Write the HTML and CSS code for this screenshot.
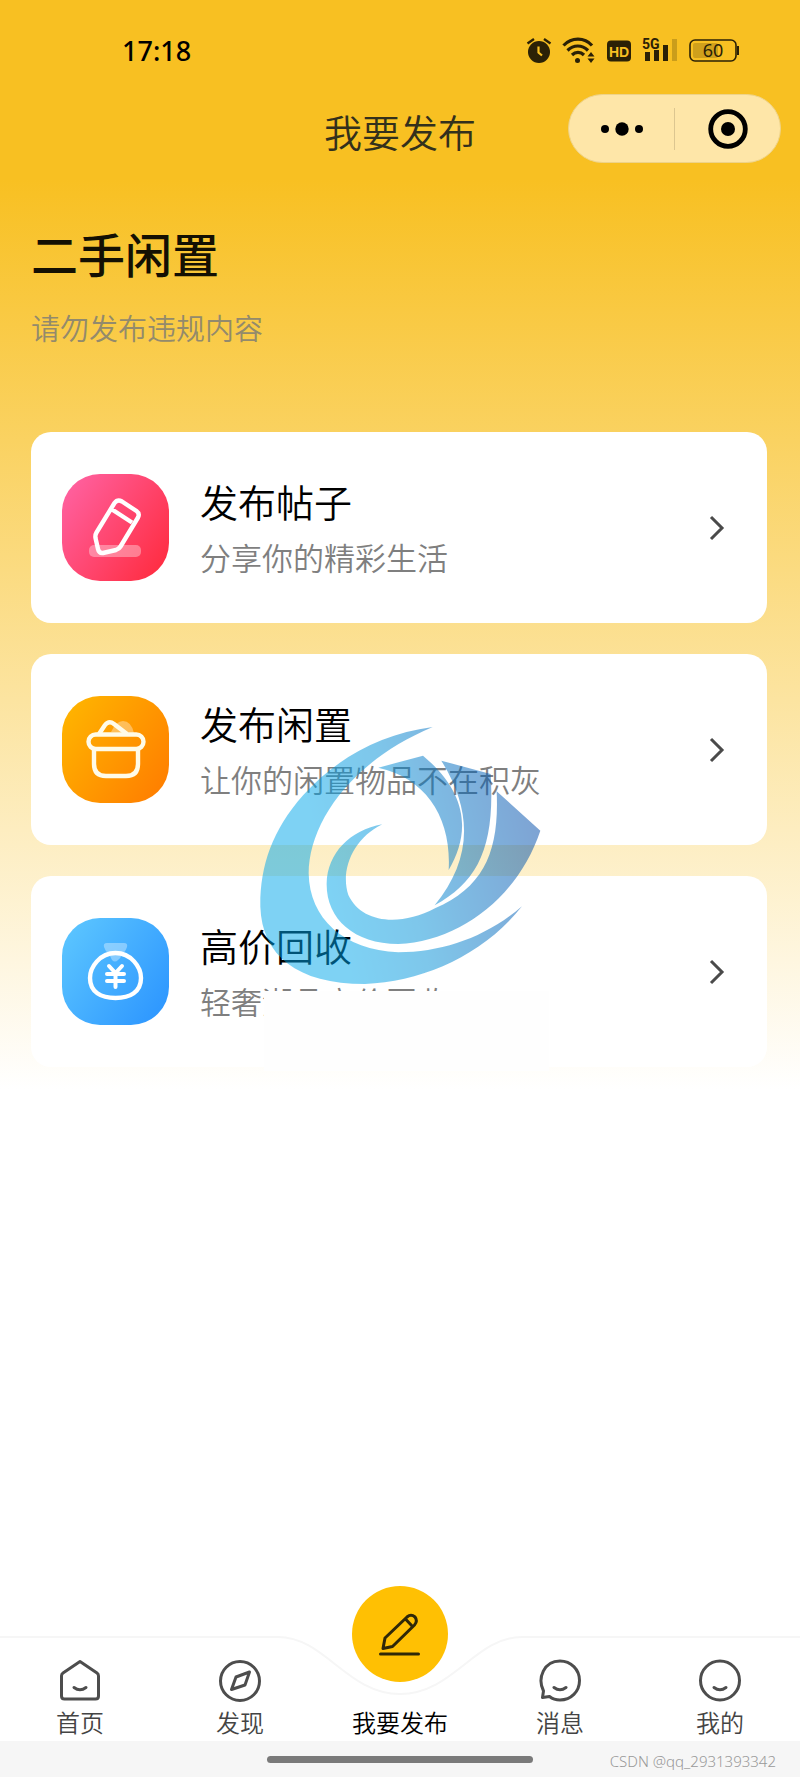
FILE: index.html
```html
<!DOCTYPE html>
<html lang="zh-CN">
<head>
<meta charset="utf-8">
<meta name="viewport" content="width=device-width, initial-scale=1">
<title>我要发布</title>
<link rel="stylesheet" href="styles.css">
</head>
<body>
<div class="page">
  <div class="status">
    <time class="status-time">17:18</time>
    <div class="status-icons">
      <svg width="26" height="28" viewBox="0 0 26 28" fill="none" stroke="#2b2106">
        <circle cx="13" cy="15" r="11" fill="#2b2106" stroke="none"/>
        <path d="M1.500 6.500 8 2M24.500 6.500 18 2" stroke-width="2.400"/>
        <path d="M12.500 9.500v6l3.500 3" stroke="#f8c022" stroke-width="2.200"/>
      </svg>
      <svg width="34" height="28" viewBox="0 0 34 28" fill="none" stroke="#2b2106" stroke-width="3.200">
        <path d="M1.500 8.500c8-8.500 21-8.500 28.500 0M5.500 13.500c6-6 14.500-6 20.500 0M10 18c3.500-3.500 8.500-3.500 12 0"/>
        <circle cx="15.500" cy="23.500" r="2.500" fill="#2b2106" stroke="none"/>
        <path d="M25.500 19.500 29 15l3.500 4.500zM25.500 21.500 29 26l3.500-4.500z" fill="#2b2106" stroke="none"/>
      </svg>
      <svg width="26" height="28" viewBox="0 0 26 28">
        <rect x="1" y="3.500" width="24" height="21" rx="4" fill="#2b2106"/>
        <text x="13" y="20" class="glyph-hd">HD</text>
      </svg>
      <svg width="36" height="40" viewBox="0 -6 36 40" fill="#2b2106">
        <text x="0" y="12" class="glyph-5g">5G</text>
        <rect x="3" y="15" width="5" height="9"/>
        <rect x="12" y="13" width="5" height="11"/>
        <rect x="21" y="8" width="5" height="16"/>
        <rect x="30" y="2" width="5" height="22" opacity=".22"/>
      </svg>
      <svg width="52" height="28" viewBox="0 0 52 28">
        <rect x="2" y="3" width="46" height="21" rx="5" fill="none" stroke="#2b2106" stroke-width="1.600"/>
        <rect x="5" y="6" width="25" height="15" rx="2" fill="#2b2106" opacity=".2"/>
        <rect x="49" y="9" width="2" height="9" fill="#2b2106"/>
        <text x="25" y="20" class="glyph-battery">60</text>
      </svg>
    </div>
  </div>

  <header class="header">
    <div class="header-title">我要发布</div>
    <div class="capsule">
      <button class="capsule-btn" type="button" aria-label="更多">
        <svg width="44" height="16" viewBox="0 0 44 16"><circle cx="5" cy="8" r="4"/><circle cx="22" cy="8" r="6.700"/><circle cx="39" cy="8" r="4"/></svg>
      </button>
      <span class="capsule-line"></span>
      <button class="capsule-btn" type="button" aria-label="关闭">
        <svg width="40" height="40" viewBox="0 0 40 40"><circle cx="20" cy="20" r="17.300" fill="none" stroke="#000" stroke-width="4.800"/><circle cx="20" cy="20" r="7"/></svg>
      </button>
    </div>
  </header>

  <main class="main">
    <h1 class="heading">二手闲置</h1>
    <p class="notice">请勿发布违规内容</p>

    <div class="cards">
      <a class="card" href="#post">
        <svg class="card-icon" viewBox="0 0 107 107" fill="none">
          <defs><linearGradient id="pink" x1="0" y1="0.150" x2="1" y2="0.850"><stop offset="0" stop-color="#ff61a0"/><stop offset="1" stop-color="#ff2c40"/></linearGradient></defs>
          <rect width="107" height="107" rx="38" fill="url(#pink)"/>
          <rect x="27" y="71" width="52" height="12" rx="5" fill="#fff" opacity=".35"/>
          <path d="M52.500 29 34.500 58.500Q33 61 33.500 64L36 75Q37 79.500 41 79L54 76Q57 75 58.500 72.500L76 43.500Q78 39.500 74.500 37L60 27.500Q55.500 25 52.500 29ZM50 35.500 70 48.500" stroke="#fff" stroke-width="4.400" stroke-linejoin="round"/>
        </svg>
        <div class="card-text">
          <h2 class="card-title">发布帖子</h2>
          <p class="card-desc">分享你的精彩生活</p>
        </div>
        <svg class="chevron" viewBox="0 0 16 26"><path d="M2 2 13 13 2 24"/></svg>
      </a>

      <a class="card" href="#idle">
        <svg class="card-icon" viewBox="0 0 107 107" fill="none">
          <defs><linearGradient id="orange" x1="0" y1="0.150" x2="1" y2="0.850"><stop offset="0" stop-color="#ffb400"/><stop offset="1" stop-color="#ff7e00"/></linearGradient></defs>
          <rect width="107" height="107" rx="38" fill="url(#orange)"/>
          <path d="M49 36Q54 25 61 25Q69 25 72 37Z" fill="#fff" opacity=".35"/>
          <path d="M37 38 43 29Q47 24 52 28L65 38M32 53V68Q32 80 44 80H64Q76 80 76 68V53" stroke="#fffbe8" stroke-width="4.400" stroke-linejoin="round"/>
          <rect x="26.500" y="38.500" width="55" height="14.500" rx="7.200" stroke="#fffbe8" stroke-width="4.400"/>
        </svg>
        <div class="card-text">
          <h2 class="card-title">发布闲置</h2>
          <p class="card-desc">让你的闲置物品不在积灰</p>
        </div>
        <svg class="chevron" viewBox="0 0 16 26"><path d="M2 2 13 13 2 24"/></svg>
      </a>

      <a class="card" href="#recycle">
        <svg class="card-icon" viewBox="0 0 107 107" fill="none">
          <defs><linearGradient id="blue" x1="0" y1="0.150" x2="1" y2="0.850"><stop offset="0" stop-color="#5bc5ff"/><stop offset="1" stop-color="#2d96ff"/></linearGradient></defs>
          <rect width="107" height="107" rx="38" fill="url(#blue)"/>
          <path d="M45 25H62Q66 25 65 29Q63 35 59 36Q60 39 56 42Q53 45 50 42L47 36Q43 33 42 29Q41 25 45 25Z" fill="#fff" opacity=".35"/>
          <path d="M53.500 35C69 35 79 49 79 60C79 74 68 80 53.500 80S28 74 28 60C28 49 38 35 53.500 35Z" stroke="#fff" stroke-width="4.400"/>
          <path d="M47 48 53.500 55 60 48M45 56H62M45 63H62M53.500 55V69" stroke="#fff" stroke-width="4" stroke-linecap="round"/>
        </svg>
        <div class="card-text">
          <h2 class="card-title">高价回收</h2>
          <p class="card-desc card-desc-faded">轻奢潮品高价回收</p>
        </div>
        <svg class="chevron" viewBox="0 0 16 26"><path d="M2 2 13 13 2 24"/></svg>
      </a>

      <svg class="swirl" viewBox="60 48 846 774">
        <defs><linearGradient id="swirl" gradientUnits="userSpaceOnUse" x1="240" y1="420" x2="880" y2="260"><stop offset="0" stop-color="#00a6eb"/><stop offset=".35" stop-color="#0090d8"/><stop offset="1" stop-color="#0049a8"/></linearGradient></defs>
        <g fill="url(#swirl)" opacity=".5">
          <path d="M578 51C420 72 290 145 190 255C95 362 60 470 61 590C66 735 170 822 375 822C550 815 730 735 846 589C740 680 610 727 475 727C310 720 208 625 206 490C207 340 330 155 578 51Z"/>
          <path d="M427 343C330 360 262 430 260 520C258 625 340 702 475 702C660 695 835 560 901 362L770 244C778 420 735 530 585 595C480 650 365 640 325 555C300 480 340 385 427 343Z"/>
          <path d="M415 173 549 137C690 255 688 375 626 480C635 325 560 205 415 173Z"/>
          <path d="M604 152 752 192C765 410 715 515 584 586C690 455 705 315 604 152Z"/>
        </g>
      </svg>
    </div>
  </main>

  <nav class="tabs">
    <div class="tabs-edge" aria-hidden="true">
      <span class="edge-line"></span>
      <svg width="260" height="60" viewBox="0 0 260 60" fill="none" stroke="#f6f6f6" stroke-width="2"><path d="M0 1H8C55 1 77 58 130 58S205 1 252 1H260"/></svg>
      <span class="edge-line"></span>
    </div>
    <a class="tab" href="#home">
      <svg class="tab-icon" viewBox="0 0 44 44"><path d="M22 2.500 39 14Q40.500 15 40.500 17V37Q40.500 40 37.500 40H6.500Q3.500 40 3.500 37V17Q3.500 15 5 14ZM16 28.500Q22 33 28 28.500"/></svg>
      <span>首页</span>
    </a>
    <a class="tab" href="#discover">
      <svg class="tab-icon" viewBox="0 0 44 44"><circle cx="22" cy="22" r="19.500"/><path d="M31.500 13 27 26 13.500 30.500 18 18Z"/></svg>
      <span>发现</span>
    </a>
    <a class="tab tab-main" href="#publish" aria-current="page">
      <svg class="tab-round" viewBox="0 0 96 96" fill="none" stroke="#2f2808" stroke-width="3" stroke-linejoin="round" stroke-linecap="round">
        <circle cx="48" cy="48" r="48" fill="#ffc003" stroke="none"/>
        <path d="M28.500 68H66.500M31 62.500 33 52 55 31Q59 27.500 63 31Q66 35 62.500 39L40.500 60.500ZM53.500 33 60.500 40.500"/>
      </svg>
      <span>我要发布</span>
    </a>
    <a class="tab" href="#message">
      <svg class="tab-icon" viewBox="0 0 44 44"><path d="M5.500 32C-1 19 6 2 22 2C33 2 41.500 10.500 41.500 21.500S33 41 22 41C18 41 14 39.500 11.500 37.500L4.500 38.500ZM16 28.500Q22 33 28 28.500"/></svg>
      <span>消息</span>
    </a>
    <a class="tab" href="#mine">
      <svg class="tab-icon" viewBox="0 0 44 44"><circle cx="22" cy="21.500" r="19.500"/><path d="M16 28.500Q22 33 28 28.500"/></svg>
      <span>我的</span>
    </a>
  </nav>

  <footer class="bottom">
    <span class="home-bar"></span>
    <span class="credit">CSDN @qq_2931393342</span>
  </footer>
</div>
</body>
</html>
```

FILE: styles.css
```css
* { box-sizing: border-box; }

body {
  margin: 0;
  background: #fff;
  color: #000;
  font-family: "Noto Sans CJK SC", sans-serif;
  font-weight: 350;
}

h1, h2, p { margin: 0; }
a { color: inherit; text-decoration: none; }
svg { display: block; flex: none; }

.page {
  display: flex;
  flex-direction: column;
  min-height: 100vh;
  background: linear-gradient(#f8c022 180px, #fff 1090px);
}

.status {
  display: flex;
  justify-content: space-between;
  align-items: center;
  height: 66px;
  padding: 36px 60px 0 122px;
}
.status-time {
  font: 500 27px/30px "Noto Sans", sans-serif;
}
.status-icons {
  display: flex;
  align-items: center;
  gap: 10px;
}
.glyph-hd { font: 700 14px "Liberation Sans", sans-serif; fill: #f8c022; text-anchor: middle; }
.glyph-5g { font: 700 14px Roboto, sans-serif; }
.glyph-battery { font: 400 18px "Noto Sans", sans-serif; fill: #2b2106; text-anchor: middle; }

.header {
  display: grid;
  grid-template-columns: 1fr auto 1fr;
  align-items: center;
  padding: 28px 19px 0;
}
.header-title {
  grid-column: 2;
  padding-top: 4px;
  font-size: 38px;
  line-height: 48px;
  color: #33301c;
}
.capsule {
  justify-self: end;
  display: flex;
  align-items: center;
  width: 213px;
  height: 69px;
  border: 1px solid #eed38a;
  border-radius: 35px;
  background: #fee6a8;
}
.capsule-btn {
  flex: 1;
  display: flex;
  justify-content: center;
  padding: 0;
  border: 0;
  background: none;
}
.capsule-line {
  width: 1px;
  height: 42px;
  background: #dcc690;
}

.main {
  flex: 1;
  padding: 62px 33px 80px 31px;
}
.heading {
  font-size: 47px;
  font-weight: 500;
  line-height: 56px;
  color: #141003;
}
.notice {
  margin-top: 28px;
  font-size: 29px;
  line-height: 36px;
  color: #938a6c;
}

.cards {
  position: relative;
  display: flex;
  flex-direction: column;
  gap: 31px;
  margin-top: 87px;
}
.card {
  display: flex;
  align-items: center;
  min-height: 191px;
  padding: 30px 42px 30px 31px;
  border-radius: 20px;
  background: #fff;
}
.card-icon {
  width: 107px;
  height: 107px;
}
.card-text {
  flex: 1;
  margin-left: 31px;
  padding-top: 2px;
}
.card-title {
  font-size: 38px;
  font-weight: 350;
  line-height: 56px;
}
.card-desc {
  position: relative;
  font-size: 31px;
  line-height: 56px;
  color: #7f7f7f;
}
.card-desc-faded::after {
  content: "";
  position: absolute;
  top: 18px;
  left: 64px;
  width: 285px;
  height: 80px;
  background: #fefefe;
}
.chevron {
  width: 16px;
  height: 26px;
  fill: none;
  stroke: #4a4a4a;
  stroke-width: 3;
}
.swirl {
  position: absolute;
  top: 294px;
  left: calc(50% + 2px);
  width: 282px;
  transform: translateX(-50%);
  pointer-events: none;
}

.tabs {
  position: relative;
  display: flex;
  align-items: flex-end;
  height: 105px;
  padding-bottom: 2px;
  background: #fff;
}
.tabs-edge {
  position: absolute;
  top: 0;
  left: 0;
  right: 0;
  display: flex;
}
.edge-line {
  flex: 1;
  height: 2px;
  background: #f6f6f6;
}
.tab {
  position: relative;
  flex: 1;
  display: flex;
  flex-direction: column;
  align-items: center;
  font-size: 24px;
  line-height: 34px;
  color: #444;
}
.tab-main { color: #000; }
.tab-icon {
  width: 44px;
  height: 44px;
  margin-bottom: 2px;
  fill: none;
  stroke: #4d4d4d;
  stroke-width: 3;
  stroke-linecap: round;
  stroke-linejoin: round;
}
.tab-round {
  width: 96px;
  height: 96px;
  margin-bottom: 23px;
}

.bottom {
  display: grid;
  grid-template-columns: 1fr 266px 1fr;
  align-items: center;
  height: 36px;
  padding: 0 24px;
  background: #f6f6f6;
}
.home-bar {
  grid-column: 2;
  height: 7px;
  border-radius: 4px;
  background: #7a7a7a;
}
.credit {
  justify-self: end;
  padding-top: 4px;
  font: 300 15px/20px "Noto Sans", sans-serif;
  color: #999;
}
```
